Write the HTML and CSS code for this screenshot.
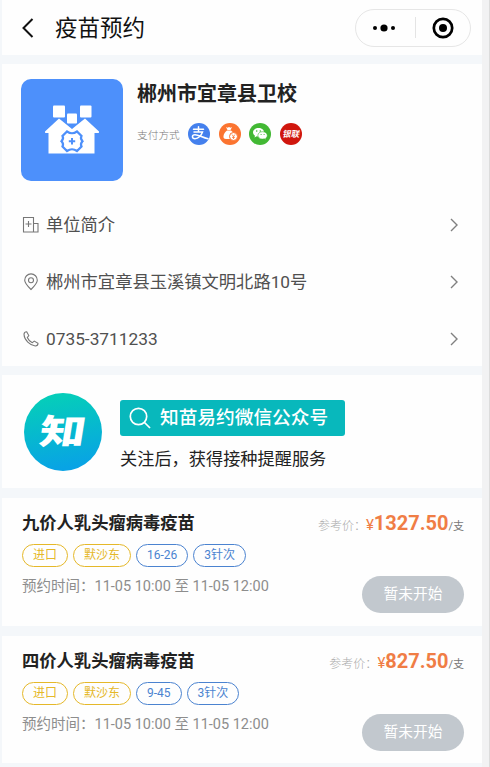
FILE: index.html
```html
<!DOCTYPE html>
<html lang="zh-CN">
<head>
<meta charset="utf-8">
<title>疫苗预约</title>
<link rel="stylesheet" href="styles.css">
</head>
<body>
<main class="page">
  <header class="nav">
    <svg class="back" width="14" height="22" viewBox="0 0 14 22"><path d="M11.5 2 2.5 11l9 9" fill="none" stroke="#111" stroke-width="2"/></svg>
    <h1 class="nav-title">疫苗预约</h1>
    <div class="capsule">
      <svg width="24" height="10" viewBox="0 0 24 10"><circle cx="3" cy="5" r="2"/><circle cx="12" cy="5" r="3.6"/><circle cx="21" cy="5" r="2"/></svg>
      <i class="capsule-line"></i>
      <svg width="22" height="22" viewBox="0 0 22 22"><circle cx="11" cy="11" r="9.2" fill="none" stroke="#000" stroke-width="2.7"/><circle cx="11" cy="11" r="4"/></svg>
    </div>
  </header>

  <section class="clinic">
    <div class="clinic-head">
      <div class="clinic-logo">
        <svg width="102" height="102" viewBox="0 0 102 102">
          <g fill="#fff">
            <rect x="32" y="26.500" width="12" height="12" rx="1"/>
            <rect x="59" y="26.500" width="11.500" height="12" rx="1"/>
            <rect x="46" y="34.500" width="10" height="10" rx="1"/>
            <path d="M38 39.500 51 50l13-10.500L78 52.500q.5 1.500-1 1.500h-3.500v20.500h-46V54H25q-1.500 0-1-1.500z"/>
          </g>
          <path d="M46 52.500q5 3.500 10 0l4.500 4.500q-1.500 2.500 1 5.200-2.500 2.500-1 5.300L56 72q-5-3.500-10 0l-4.500-4.500q1.500-2.800-1-5.300 2.500-2.700 1-5.200z" fill="none" stroke="#4d90fb" stroke-width="2.200"/>
          <path d="M51 59v6.400M47.800 62.200h6.400" stroke="#4d90fb" stroke-width="2"/>
        </svg>
      </div>
      <div class="clinic-info">
        <h2 class="clinic-name">郴州市宜章县卫校</h2>
        <div class="pay">
          <span class="pay-label">支付方式</span>
          <span class="pay-icon alipay">
            <svg width="22" height="22" viewBox="0 0 22 22" fill="none" stroke="#fff" stroke-linecap="round"><path d="M5.500 6.300h10M10.500 3.800v5M6 9h8.500c-1 3-4 6.800-7.500 6.800-3.500 0-3.300-4 0-4 3.500 0 7 2.500 13 4" stroke-width="1.500"/></svg>
          </span>
          <span class="pay-icon cash">
            <svg width="22" height="22" viewBox="0 0 22 22"><path d="m7 4 1.500.7L10 4l1.500.7L13 4l-1.500 3h-3z" fill="#fff"/><path d="M8 7.500h4c2 1.500 3.500 4 3.500 6 0 2-1 2.500-2.500 2.500H7c-2 0-2.800-1-2.500-3C4.800 10.500 6.500 8.700 8 7.500z" fill="#fff"/><circle cx="14.500" cy="13.500" r="4" fill="#fff" stroke="#fb7430"/><path d="m13 11.500 1.500 2 1.500-2m-1.500 2v2.500m-1.500-1.700h3" fill="none" stroke="#fb7430" stroke-width=".8"/></svg>
          </span>
          <span class="pay-icon wechat">
            <svg width="22" height="22" viewBox="0 0 22 22"><path d="M9.500 5C6.300 5 4 6.900 4 9.300c0 1.500.8 2.600 2 3.400L5.500 14.500l2.200-1.200c.8.200 1.500.3 2.300.2 3-.2 5-2 5-4.300C15 6.900 12.700 5 9.500 5z" fill="#fff"/><path d="M13.500 8.700c-2.700 0-4.600 1.600-4.600 3.700s2 3.700 4.600 3.700c.6 0 1.200-.1 1.800-.3l1.800 1-.4-1.600c1-.7 1.600-1.700 1.600-2.800 0-2.100-2-3.700-4.800-3.700z" fill="#fff" stroke="#42b834" stroke-width=".6"/><g fill="#42b834"><circle cx="7.700" cy="8" r=".8"/><circle cx="11.300" cy="8" r=".8"/><circle cx="12.100" cy="11.500" r=".6"/><circle cx="15.100" cy="11.500" r=".6"/></g></svg>
          </span>
          <span class="pay-icon union"><b>银联</b></span>
        </div>
      </div>
    </div>
    <div class="row">
      <svg class="row-icon" width="18" height="18" viewBox="0 0 18 18"><path d="M1.500 1.500h10v14.500h-10zM11.500 7.500H16V16h-4.500M6.500 5v6M3.500 8h6"/></svg>
      <span>单位简介</span>
      <svg class="arrow" width="9" height="14" viewBox="0 0 9 14"><path d="m1 1 6 6-6 6"/></svg>
    </div>
    <div class="row">
      <svg class="row-icon" width="18" height="18" viewBox="0 0 18 18"><path d="M9 16.500C5.500 13 2.700 10.200 2.700 7.200a6.300 6.300 0 0 1 12.600 0c0 3-2.800 5.800-6.300 9.300z"/><circle cx="9" cy="7.200" r="2.500"/></svg>
      <span>郴州市宜章县玉溪镇文明北路10号</span>
      <svg class="arrow" width="9" height="14" viewBox="0 0 9 14"><path d="m1 1 6 6-6 6"/></svg>
    </div>
    <div class="row">
      <svg class="row-icon" width="18" height="18" viewBox="0 0 18 18"><path d="M2 4.500C2 2.500 3.200 1.700 4.700 1.700L6.800 5.600 5.300 7.500c1 2.400 2.800 4.100 5 5.200l2-1.600 3.700 2.200c0 1.700-1 2.700-2.700 2.700C8 15.500 2.300 10 2 4.500z"/></svg>
      <span>0735-3711233</span>
      <svg class="arrow" width="9" height="14" viewBox="0 0 9 14"><path d="m1 1 6 6-6 6"/></svg>
    </div>
  </section>

  <section class="follow">
    <div class="follow-logo"><b>知</b></div>
    <div>
      <div class="search">
        <svg width="22" height="22" viewBox="0 0 22 22" fill="none" stroke="#fff" stroke-width="1.700"><circle cx="9.500" cy="9.500" r="8.200"/><path d="m15.500 15.500 5.500 5.500"/></svg>
        <span>知苗易约微信公众号</span>
      </div>
      <p class="follow-tip">关注后，获得接种提醒服务</p>
    </div>
  </section>

  <section class="vaccine">
    <div class="vaccine-top">
      <h3>九价人乳头瘤病毒疫苗</h3>
      <p class="price"><span class="price-label">参考价：</span><span class="yen">¥</span><b>1327.50</b><span class="unit">/支</span></p>
    </div>
    <div class="tags"><span class="tag gold">进口</span><span class="tag gold">默沙东</span><span class="tag blue">16-26</span><span class="tag blue">3针次</span></div>
    <div class="vaccine-bottom">
      <p class="time">预约时间：11-05 10:00 至 11-05 12:00</p>
      <button class="status">暂未开始</button>
    </div>
  </section>

  <section class="vaccine">
    <div class="vaccine-top">
      <h3>四价人乳头瘤病毒疫苗</h3>
      <p class="price"><span class="price-label">参考价：</span><span class="yen">¥</span><b>827.50</b><span class="unit">/支</span></p>
    </div>
    <div class="tags"><span class="tag gold">进口</span><span class="tag gold">默沙东</span><span class="tag blue">9-45</span><span class="tag blue">3针次</span></div>
    <div class="vaccine-bottom">
      <p class="time">预约时间：11-05 10:00 至 11-05 12:00</p>
      <button class="status">暂未开始</button>
    </div>
  </section>
</main>
</body>
</html>
```
FILE: styles.css
```css
* { box-sizing: border-box; margin: 0; padding: 0; }
body {
  height: 767px;
  overflow: hidden;
  background: #f2f2f3;
  border-right: 1px solid #dcdcdc;
  font-family: Roboto, "Noto Sans CJK SC", sans-serif;
  color: #222;
}
svg { display: block; flex: none; }
.page {
  display: flex;
  flex-direction: column;
  width: 482px;
  height: 767px;
  overflow: hidden;
  padding-left: 2px;
  background: #f4f7fa;
}
.page > * { flex: none; background: #fefefe; }

.nav { height: 55px; display: flex; align-items: center; padding: 0 11px 0 19px; }
.nav-title { margin-left: 20px; font-size: 22.5px; font-weight: 400; line-height: 32px; color: #111; }
.capsule {
  width: 116px;
  height: 38px;
  margin-left: auto;
  border: 1px solid #e6e6e6;
  border-radius: 19px;
  display: flex;
  align-items: center;
  justify-content: space-between;
  padding: 0 16px;
}
.capsule-line { width: 1px; height: 21px; background: #e4e4e4; margin-left: 2px; }

.clinic { margin-top: 9px; height: 302px; padding-top: 15px; }
.clinic-head { display: flex; height: 117px; padding-left: 19px; }
.clinic-logo { width: 102px; height: 102px; border-radius: 10px; background: #4d90fb; }
.clinic-info { margin-left: 14px; }
.clinic-name { font-size: 20px; line-height: 30px; font-weight: 700; }
.pay { display: flex; align-items: center; margin-top: 14px; }
.pay-label { width: 51px; font-size: 10.700px; font-weight: 300; color: #777; white-space: nowrap; }
.pay-icon { width: 22px; height: 22px; border-radius: 50%; margin-right: 8.700px; display: flex; align-items: center; justify-content: center; overflow: hidden; }
.alipay { background: #4480ed; }
.cash { background: #fb7430; }
.wechat { background: #42b834; }
.union { background: #d0160d; }
.union b { color: #fff; font-size: 8.500px; line-height: 10px; transform: skewX(-12deg); white-space: nowrap; }

.row { height: 57.300px; display: flex; align-items: center; padding: 0 23px 0 20px; font-size: 17.300px; color: #505050; }
.row span { margin-left: 6px; line-height: 26px; }
.row-icon { fill: none; stroke: #777; stroke-width: 1.100; }
.arrow { margin-left: auto; fill: none; stroke: #808080; stroke-width: 1.400; }

.follow { margin-top: 9px; height: 113px; padding: 18px 0 0 22px; display: flex; }
.follow-logo {
  width: 78px;
  height: 78px;
  margin-right: 18px;
  border-radius: 50%;
  background: linear-gradient(170deg, #05cdba 10%, #08a3e5 90%);
  display: flex;
  align-items: center;
  justify-content: center;
}
.follow-logo b { color: #fff; font-size: 46px; font-weight: 900; line-height: 40px; transform: skewX(-9deg) scaleY(.75); }
.search {
  width: 225px;
  height: 36px;
  margin-top: 7px;
  padding-left: 9px;
  border-radius: 3px;
  background: #08b8bc;
  display: flex;
  align-items: center;
  color: #fff;
  font-size: 18.700px;
  font-weight: 500;
}
.search span { margin-left: 9px; line-height: 28px; }
.follow-tip { margin-top: 10px; font-size: 17.200px; line-height: 26px; white-space: nowrap; }

.vaccine { margin-top: 10px; height: 128px; padding: 11px 18px 0 20px; }
.vaccine + .vaccine { height: 127px; }
.vaccine-top { display: flex; justify-content: space-between; height: 28px; }
.vaccine-top h3 { font-size: 17.300px; line-height: 28px; font-weight: 700; }
.price { display: flex; align-items: baseline; line-height: 28px; color: #f07d45; }
.price-label { font-size: 12px; font-weight: 300; color: #aaa; }
.yen { font-size: 15px; }
.price b { font-size: 20px; }
.unit { font-size: 11px; color: #777; }
.tags { display: flex; gap: 5px; margin-top: 7px; height: 23px; }
.tag { height: 23px; padding: 0 10px; border: 1.500px solid; border-radius: 12px; font-size: 12px; line-height: 20px; }
.gold { color: #e5b829; }
.blue { color: #4b83d0; }
.vaccine-bottom { display: flex; justify-content: space-between; }
.time { margin-top: 9px; font-size: 14.500px; line-height: 22px; color: #8d8d8d; font-weight: 400; }
.status {
  width: 102px;
  height: 37px;
  margin-top: 9px;
  border: 0;
  border-radius: 19px;
  background: #c2c8ce;
  color: #fff;
  font: 400 14.700px/37px Roboto, "Noto Sans CJK SC", sans-serif;
}
```
